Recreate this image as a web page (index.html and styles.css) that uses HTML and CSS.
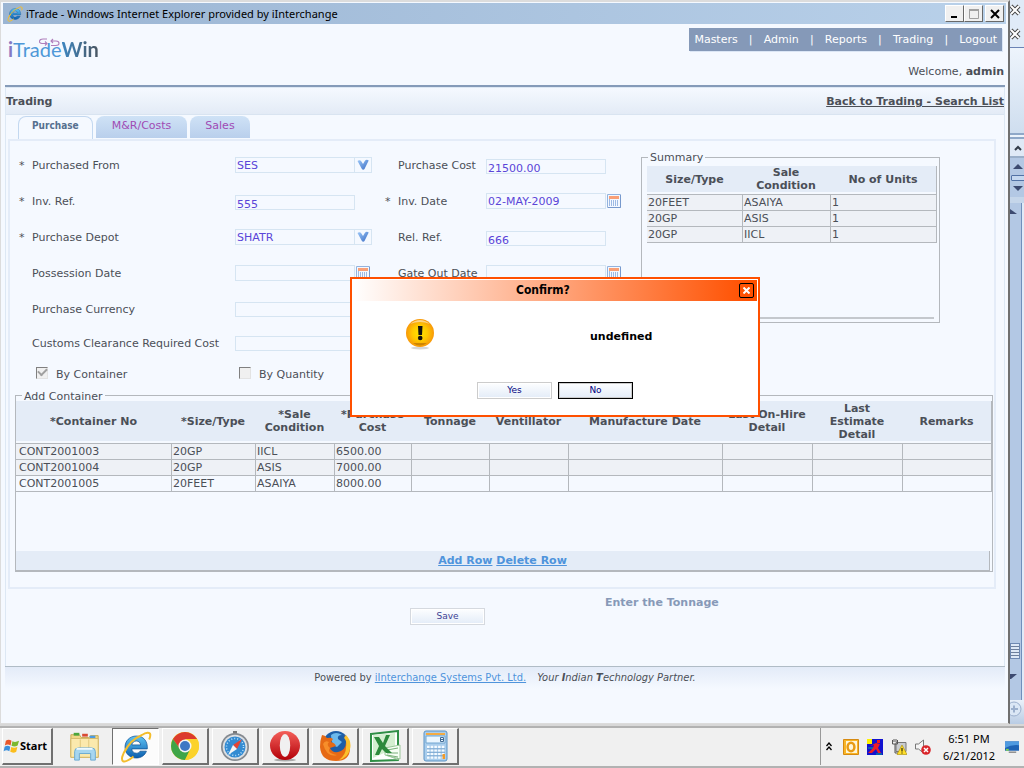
FILE: index.html
```html
<!DOCTYPE html>
<html lang="en">
<head>
<meta charset="utf-8">
<title>iTrade - Trading</title>
<link rel="stylesheet" href="styles.css">
</head>
<body>
<svg class="defs" aria-hidden="true">
  <defs>
    <linearGradient id="blue" x1="0" y1="0" x2="0" y2="1"><stop offset="0" stop-color="#5fc4f5"/><stop offset="1" stop-color="#0c5fae"/></linearGradient>
    <linearGradient id="red" x1="0" y1="0" x2="0" y2="1"><stop offset="0" stop-color="#f4605a"/><stop offset="1" stop-color="#b30008"/></linearGradient>
    <linearGradient id="tick" x1="0" y1="0" x2="1" y2="1"><stop offset="0" stop-color="#9cc8f8"/><stop offset="1" stop-color="#3a6cc4"/></linearGradient>
    <radialGradient id="amber" cx=".5" cy=".5" r=".55"><stop offset="0" stop-color="#ffe600"/><stop offset=".5" stop-color="#ffc800"/><stop offset="1" stop-color="#f68e0c"/></radialGradient>
    <symbol id="i-ie" viewBox="0 0 32 32">
      <path d="M16.500 5C9.600 5 5 10 5 16.200 5 22.600 9.900 27 16.200 27c4.900 0 8.600-2.500 10.200-6.800h-6.300c-.9 1.400-2.100 2-3.700 2-2.500 0-4.500-1.600-4.600-4.300h15.500C27.900 10.300 23.500 5 16.500 5zm-4.600 8.900c.3-2.300 2-3.900 4.400-3.900 2.500 0 4.100 1.600 4.300 3.900z" fill="url(#blue)" stroke="#0b4d90" stroke-width=".7"/>
      <path d="M22 4c4-2.800 8-3 8.300-.3.100 1.700-.4 3.300-1.100 4.800M6.500 17C2 24 .8 29 3.200 30.300c2.200 1 6.200-1.300 10.300-4.700M22 4C14.800 7 8 13.500 4.500 21" fill="none" stroke="#f4bd2c" stroke-width="2"/>
    </symbol>
    <symbol id="i-cal" viewBox="0 0 14 14">
      <path d="M.5.500h13v13H.5z" fill="#f4f8ff" stroke="#93b3de"/><path d="M2 2h10v3H2z" fill="#f9a077"/>
      <path d="M2.500 5v7M4.500 6v6M6.500 6v6M8.500 6v6M10.500 6v6" stroke="#9dbae4"/><path d="M13.500 1v12.500H1" stroke="#7799cd" fill="none"/>
    </symbol>
    <symbol id="i-down" viewBox="0 0 12 12"><path d="M.5 2c1.200-1 3-.8 3.900.4L6 5l1.800-3c.9-1.300 2.500-1.500 3.900-.5L7.500 10c-.6 1.100-2 1.100-2.600 0z" fill="url(#tick)"/></symbol>
  </defs>
</svg>

<div class="desktop">
  <div class="window">
    <header class="titlebar">
      <svg class="i16"><use href="#i-ie"/></svg>
      <span class="caption">iTrade - Windows Internet Explorer provided by iInterchange</span>
      <span class="winbtns">
        <button class="winbtn" aria-label="Minimize"><svg width="10" height="10"><path d="M1 8h6" stroke="#000" stroke-width="2"/></svg></button>
        <button class="winbtn" aria-label="Maximize"><svg width="10" height="10"><path d="M.5 1.500h9v8h-9z" fill="#f0f0f0" stroke="#a0a0a0"/><path d="M0 1h10" stroke="#a0a0a0" stroke-width="2"/></svg></button>
        <button class="winbtn winclose" aria-label="Close"><svg width="10" height="10"><path d="M1 1l8 8M9 1l-8 8" stroke="#000" stroke-width="2"/></svg></button>
      </span>
    </header>

    <div class="page">
      <div class="masthead">
        <div class="logo">
          <svg class="swirl" viewBox="0 0 21 9"><path d="M8 1H4C0 1-1 5 3 5.500h5M6 3.500l2 2-2 2M12 3h5c4 0 4 4.500 0 4.500h-5M14 1l-2 2 2 2" fill="none" stroke="#b07fbc" stroke-width="1.100"/></svg>
          <span class="logo-i">i</span><span class="logo-trade">Trade</span><span class="logo-win">Win</span>
        </div>
        <div class="account">
          <nav class="menu"><a href="#">Masters</a><i>|</i><a href="#">Admin</a><i>|</i><a href="#">Reports</a><i>|</i><a href="#">Trading</a><i>|</i><a href="#">Logout</a></nav>
          <p class="welcome">Welcome, <b>admin</b></p>
        </div>
      </div>

      <main class="content">
        <div class="heading"><h1>Trading</h1><a href="#">Back to Trading - Search List</a></div>
        <div class="tabs"><button class="tab active">Purchase</button><button class="tab">M&amp;R/Costs</button><button class="tab">Sales</button></div>

        <section class="panel">
          <div class="top">
            <form class="form" id="purchase">
              <span>*</span><label for="from">Purchased From</label>
              <div class="field"><select id="from"><option>SES</option></select><span class="arrow"><svg class="i12"><use href="#i-down"/></svg></span></div>
              <span></span><label for="cost">Purchase Cost</label>
              <div class="field plain"><input id="cost" value="21500.00"></div>

              <span>*</span><label for="inv">Inv. Ref.</label>
              <div class="field plain"><input id="inv" value="555"></div>
              <span>*</span><label for="invdate">Inv. Date</label>
              <div class="field"><input id="invdate" value="02-MAY-2009"><button type="button" class="cal" aria-label="Pick invoice date"><svg class="i14"><use href="#i-cal"/></svg></button></div>

              <span>*</span><label for="depot">Purchase Depot</label>
              <div class="field"><select id="depot"><option>SHATR</option></select><span class="arrow"><svg class="i12"><use href="#i-down"/></svg></span></div>
              <span></span><label for="rel">Rel. Ref.</label>
              <div class="field plain"><input id="rel" value="666"></div>

              <span></span><label for="poss">Possession Date</label>
              <div class="field"><input id="poss"><button type="button" class="cal" aria-label="Pick possession date"><svg class="i14"><use href="#i-cal"/></svg></button></div>
              <span></span><label for="gate">Gate Out Date</label>
              <div class="field"><input id="gate"><button type="button" class="cal" aria-label="Pick gate out date"><svg class="i14"><use href="#i-cal"/></svg></button></div>

              <span></span><label for="cur">Purchase Currency</label>
              <div class="field wide"><input id="cur"></div>
              <span></span><label for="customs">Customs Clearance Required Cost</label>
              <div class="field wide"><input id="customs"></div>
              <div class="checks">
                <label><input type="checkbox" checked disabled>By Container</label>
                <label><input type="checkbox" disabled>By Quantity</label>
              </div>
            </form>

            <fieldset class="box summary">
              <legend>Summary</legend>
              <div class="scroller">
                <table class="grid">
                  <colgroup><col class="w95"><col class="w88"><col class="w106"></colgroup>
                  <thead><tr><th>Size/Type</th><th>Sale Condition</th><th>No of Units</th></tr></thead>
                  <tbody>
                    <tr><td>20FEET</td><td>ASAIYA</td><td>1</td></tr>
                    <tr><td>20GP</td><td>ASIS</td><td>1</td></tr>
                    <tr><td>20GP</td><td>IICL</td><td>1</td></tr>
                  </tbody>
                </table>
              </div>
            </fieldset>
          </div>

          <fieldset class="box containers">
            <legend>Add Container</legend>
            <div class="rows">
              <table class="grid tall">
                <colgroup><col class="w155"><col class="w84"><col class="w79"><col class="w77"><col class="w78"><col class="w79"><col class="w154"><col class="w90"><col class="w90"><col class="w89"></colgroup>
                <thead><tr><th>*Container No</th><th>*Size/Type</th><th>*Sale Condition</th><th>*Purchase Cost</th><th>Tonnage</th><th>Ventillator</th><th>Manufacture Date</th><th>Last On-Hire Detail</th><th>Last<br>Estimate<br>Detail</th><th>Remarks</th></tr></thead>
                <tbody>
                  <tr><td>CONT2001003</td><td>20GP</td><td>IICL</td><td>6500.00</td><td></td><td></td><td></td><td></td><td></td><td></td></tr>
                  <tr><td>CONT2001004</td><td>20GP</td><td>ASIS</td><td>7000.00</td><td></td><td></td><td></td><td></td><td></td><td></td></tr>
                  <tr class="light"><td>CONT2001005</td><td>20FEET</td><td>ASAIYA</td><td>8000.00</td><td></td><td></td><td></td><td></td><td></td><td></td></tr>
                </tbody>
              </table>
            </div>
            <div class="rowbar"><a href="#">Add Row</a> <a href="#">Delete Row</a></div>
          </fieldset>
        </section>

        <div class="actions">
          <button class="btn" form="purchase">Save</button>
          <p class="hint">Enter the Tonnage</p>
        </div>
      </main>

      <footer class="footer">Powered by <a href="#">iInterchange Systems Pvt. Ltd.</a> <em>Your <b>I</b>ndian <b>T</b>echnology Partner.</em></footer>
    </div>

    <div class="dialog" role="dialog" aria-label="Confirm?">
      <div class="dialog-head"><span>Confirm?</span>
        <button class="dialog-x" aria-label="Close dialog"><svg width="7" height="7"><path d="M.5.500l6 6M6.500.500l-6 6" stroke="#fff" stroke-width="2"/></svg></button>
      </div>
      <div class="dialog-body">
        <svg class="warn" viewBox="0 0 30 32"><ellipse cx="15" cy="30" rx="9" ry="1.500" fill="#bbb" opacity=".6"/><circle cx="15" cy="15" r="14" fill="url(#amber)"/><path d="M5 6Q15-2 25 6 15 2 5 6z" fill="#fff" opacity=".5"/><path d="M8 25h14q-7 5-14 0z" fill="#b06a00" opacity=".6"/><path d="M13 8h4.500l-.5 9h-3.500z" fill="#111"/><circle cx="15.200" cy="20" r="2.300" fill="#111"/></svg>
        <p>undefined</p>
      </div>
      <div class="dialog-foot"><button class="btn">Yes</button><button class="btn default">No</button></div>
    </div>
  </div>

  <aside class="behind">
    <div class="b-tools">
      <svg width="12" height="12"><path d="M1 2l8 8M9 2l-8 8" stroke="#444" stroke-width="4"/><path d="M1 2l8 8M9 2l-8 8" stroke="#fff" stroke-width="2"/></svg>
      <svg width="12" height="12"><path d="M1 2l8 8M9 2l-8 8" stroke="#444" stroke-width="4"/><path d="M1 2l8 8M9 2l-8 8" stroke="#fff" stroke-width="2"/></svg>
    </div>
    <div class="b-ribbon"></div>
    <div class="b-collapse"><svg width="8" height="6"><path d="M1 5l3-3 3 3" fill="none" stroke="#333c4a" stroke-width="2"/></svg></div>
    <div class="b-scroll">
      <svg width="10" height="6"><path d="M0 5l5-5 5 5z" fill="#3c4a70"/></svg>
      <span class="b-thumb"></span>
      <svg width="10" height="6"><path d="M0 0h10L5 5z" fill="#3c4a70"/></svg>
    </div>
    <div class="b-track">
      <svg width="8" height="6"><path d="M0 0l7 5H0z" fill="#3c4a70"/></svg>
      <span class="b-grip"></span>
      <svg width="8" height="6"><path d="M0 0h7L1 5H0z" fill="#3c4a70"/></svg>
    </div>
    <div class="b-zoom"><svg width="15" height="18"><circle cx="4" cy="9" r="7" fill="#dbe7f5" stroke="#9cb0cd"/><path d="M1 9h7M4 5.500v7" stroke="#9cb0cd" stroke-width="2"/></svg></div>
  </aside>
</div>

<div class="taskbar">
  <button class="start"><svg width="17" height="16" viewBox="0 0 18 16"><path d="M3 2.500q3-2 6 0L8 7.500q-3-2-6 0z" fill="#e8562a"/><path d="M10 3q3 1.500 7-.5L15.500 7.500q-3 2-6.500.300z" fill="#7cb82f"/><path d="M1.700 8.700q3-2 6 0L6.700 13.500q-3-2-6 0z" fill="#3a8fdc"/><path d="M8.700 9q3 1.500 6.500 0L14 14q-3 2-6.300.2z" fill="#fbbd1c"/></svg>Start</button>
  <button class="task flat" aria-label="Windows Explorer"><svg viewBox="0 0 34 34"><path d="M2 5h9l2 3h8l2-2h8v23H2z" fill="#f0d888" stroke="#c9a74e"/><path d="M5 3h6v3H5z" fill="#4aa53c"/><path d="M14 4h6v3h-6z" fill="#d94a33"/><path d="M22 6h6v3h-6z" fill="#4b9be2"/><path d="M2 9h29v20H2z" fill="#fbe9ad" stroke="#d3b869"/><path d="M12 10v14M21 10v14" stroke="#dfc67c"/><path d="M6 32v-9q0-4 4-4h14q4 0 4 4v9h-5v-7H11v7z" fill="#a6d6f0" stroke="#68a9d2"/><path d="M8 20h17" stroke="#effaff" stroke-width="2"/></svg></button>
  <button class="task pressed" aria-label="Internet Explorer"><svg><use href="#i-ie"/></svg></button>
  <button class="task" aria-label="Chrome"><svg viewBox="0 0 32 32"><circle cx="16" cy="16" r="14" fill="#fcd116"/><path d="M3.900 9A14 14 0 0 1 28.100 9L16 10l-5.200 9z" fill="#dc3b2e"/><path d="M3.900 9A14 14 0 0 0 16 30l5.200-11H11z" fill="#3fa548"/><path d="M16 9h12.100A14 14 0 0 1 16 30l6-11z" fill="#fbd22b"/><circle cx="16" cy="16" r="6.500" fill="#f5f5f5"/><circle cx="16" cy="16" r="5" fill="#3f78c4"/></svg></button>
  <button class="task" aria-label="Safari"><svg viewBox="0 0 32 32"><path d="M14 1h4v3h-4z" fill="#777"/><circle cx="16" cy="17" r="14" fill="#858a90"/><circle cx="16" cy="17" r="12.300" fill="#dcdfe2"/><circle cx="16" cy="17" r="10.500" fill="#338bd2"/><circle cx="16" cy="17" r="8.500" fill="none" stroke="#bce1f8" stroke-width="1.500" stroke-dasharray="1 2"/><path d="M23 9l-5 10-4-4z" fill="#e44332"/><path d="M9 25l5-10 4 4z" fill="#f5f5f5"/></svg></button>
  <button class="task" aria-label="Opera"><svg viewBox="0 0 32 32"><ellipse cx="16" cy="30" rx="11" ry="1.500" fill="#aaa"/><ellipse cx="16" cy="15.500" rx="15" ry="14.500" fill="url(#red)"/><ellipse cx="16" cy="15.500" rx="5.200" ry="11.500" fill="#f0f0f0"/></svg></button>
  <button class="task" aria-label="Firefox"><svg viewBox="0 0 32 32"><circle cx="17" cy="14" r="13" fill="#1d5ea8"/><path d="M12 5q5-4 11 0-5 0-4 4l4 3-5 5q-6-2-6-12z" fill="#6cb9ec"/><path d="M3 5q3 0 5 3 4-1 6 1l-2 3q4 1 5 4l-6 2q2 5 8 4 8-2 8-10 0-4-2-7 6 5 6 13 0 13-14 13Q2 31 1 17 1 10 3 5z" fill="#e66a15"/><path d="M27 5q6 6 4 14-2 9-11 11 7-5 7-13 1-7-2-9z" fill="#fbc02c"/><path d="M4 14q2-4 6-2-3 3 1 6-4 5 7 7-10 3-14-11z" fill="#f78e2a"/></svg></button>
  <button class="task" aria-label="Excel"><svg viewBox="0 0 32 32"><path d="M2 4l27-3v29L2 31z" fill="#fff" stroke="#2f8f45" stroke-width="2"/><path d="M4 5l22-2v15L4 28z" fill="#d4efd0"/><path d="M16 18l15-3v14l-15-4zM17 25l13 5" fill="#f7fff5" stroke="#9bc79a"/><path d="M18 20l11-2M18 23l11 0M18 25l11 2" stroke="#79b07a"/><path d="M5 7h5l4 6 3-8h4l-5 11 7 7h-6l-4-4-3 6H6l4-9z" fill="#2c8a3b"/></svg></button>
  <button class="task" aria-label="Calculator"><svg viewBox="0 0 32 32"><rect x="5" y="1" width="23" height="30" rx="2" fill="#a9cdec" stroke="#5b92c4"/><path d="M7 3h19v2H7z" fill="#f4ab42"/><path d="M7 6h19v7H7z" fill="#eaf6ff" stroke="#72a6d0"/><path d="M21.500 7.500h3v4h-3zM21.500 9.500h3" fill="none" stroke="#426a93"/><path d="M8 17h18M8 20.500h18M8 24h18M8 27.500h18" stroke="#f5fbff" stroke-width="2.500" stroke-dasharray="2.500 1.200"/><path d="M8 18.800h18M8 22.300h18M8 25.800h18" stroke="#6b9bc6" stroke-width=".8"/><path d="M23.500 24h2.500v5h-2.500z" fill="#f29a28"/></svg></button>
  <div class="tray">
    <svg width="6" height="9"><path d="M.5 4l2.500-3 2.500 3M.5 8l2.500-3 2.500 3" fill="none" stroke="#000" stroke-width="1.300"/></svg>
    <svg class="i16" viewBox="0 0 16 16"><path d="M.5.500h15v15H.5z" fill="#f9b526" stroke="#d68a11"/><path d="M3 2h11v12H3z" fill="#fff6d8"/><ellipse cx="8" cy="8" rx="3.400" ry="4.200" fill="none" stroke="#e99b14" stroke-width="2.500"/></svg>
    <svg class="i16" viewBox="0 0 16 16"><path d="M0 0h16v16H0z" fill="#1212d0"/><path d="M0 0h5v5H0z" fill="#fff200"/><path d="M10 1h3v3h-3zM9 4l4 1-2 4 3 5h-3l-2-4-4 4H1l5-5 1-3-4 1z" fill="#ee1c24"/><path d="M1 9h5M9 15h6" stroke="#0a8"/></svg>
    <svg class="i16" viewBox="0 0 16 16"><path d="M5 3.500h10v9H5z" fill="#c9ccd0" stroke="#777"/><path d="M1.500 1v4h5V1M3 0v3M5 0v3M4 5v9h3" fill="none" stroke="#555"/><path d="M11 6l5 9.500H6z" fill="#ffde2a" stroke="#a88b00" stroke-width=".6"/><path d="M11 9v3.500M11 13.500v1" stroke="#000"/></svg>
    <svg class="i16" viewBox="0 0 16 16"><path d="M.5 5h3l5-4v13l-5-4h-3z" fill="#f4f4f4" stroke="#777"/><circle cx="11" cy="11" r="4.800" fill="#d9252a"/><path d="M9 9l4 4M13 9l-4 4" stroke="#fff" stroke-width="1.500"/></svg>
    <time class="clock">6:51 PM<br>6/21/2012</time>
    <svg width="14" height="14" viewBox="0 0 15 14"><path d="M0 1h15v10H0z" fill="#1f63b5"/><path d="M0 1h15v4Q7 4 0 8z" fill="#4f9ae0"/><path d="M1 9h3v2H1z" fill="#7bd34b"/><path d="M4 12h8v1H4z" fill="#555"/></svg>
  </div>
</div>
</body>
</html>
```
FILE: styles.css
```css
* { box-sizing: border-box; }
body {
  margin: 0;
  min-height: 100vh;
  display: flex;
  flex-direction: column;
  font: 11px/13px "DejaVu Sans", Verdana, sans-serif;
  color: #4b4f57;
  background: #b2b2b2;
}
button, input, select { font: inherit; color: inherit; margin: 0; padding: 0; border: 0; background: none; border-radius: 0; }
h1, p { margin: 0; font-size: 11px; }
svg { display: block; flex: none; }
.defs { position: absolute; width: 0; height: 0; }
.i16 { width: 16px; height: 16px; }
.i14 { width: 14px; height: 14px; }
.i12 { width: 12px; height: 12px; }

.desktop { flex: 1; display: flex; }
.window {
  position: relative;
  flex: 1;
  display: flex;
  flex-direction: column;
  background: #f5f9ff;
  border: 1px solid #dcdcdc;
  border-top-width: 2px;
  border-right: 2px solid #707070;
  padding: 1px 2px 0;
}

.titlebar {
  display: flex;
  align-items: center;
  gap: 3px;
  height: 21px;
  padding: 0 2px 0 4px;
  background: linear-gradient(90deg, #9bb5d3, #b9d1ea);
  color: #000;
  font: 11px/20px "Noto Sans", sans-serif;
}
.caption { flex: 1; }
.winbtns { display: flex; }
.winbtn {
  width: 19px;
  height: 17px;
  display: grid;
  place-items: center;
  background: #f0f0f0;
  border: 1px solid #fff;
  border-right-color: #696969;
  border-bottom-color: #696969;
}
.winclose { margin-left: 2px; }

.page { flex: 1; display: flex; flex-direction: column; padding: 0 1px 0 2px; }
.masthead { display: flex; justify-content: space-between; height: 63px; padding: 4px 3px 0; border-bottom: 2px solid #859bb9; }
.logo { position: relative; height: 36px; padding-top: 9px; display: flex; font: 20px/24px Lato, sans-serif; }
.logo-i { color: #8679c4; font-weight: 700; }
.logo-trade { color: #4e98d8; }
.logo-win { color: transparent; background: linear-gradient(90deg, #3d86c0, #4a5560); background-clip: text; font-weight: 700; }
.swirl { position: absolute; left: 31px; top: 10px; width: 21px; height: 9px; }
.account { display: flex; flex-direction: column; align-items: flex-end; }
.menu { display: flex; height: 23px; padding: 0 5px; line-height: 24px; background: #8599b8; color: #fff; box-shadow: 1px 1px #dbe6f5; }
.menu a { color: #fff; text-decoration: none; }
.menu i { font-style: normal; width: 26px; text-align: center; }
.welcome { padding: 14px 0 0; margin-right: -2px; }

.content { flex: 1; border: 1px solid #dde8f4; border-width: 1px 1px 0; display: flex; flex-direction: column; }
.heading { display: flex; justify-content: space-between; height: 27px; line-height: 27px; font-weight: 700; background: linear-gradient(#f5f9ff, #e3ebf6); border-bottom: 1px solid #d9e4f1; }
.heading a { color: inherit; }
.tabs { display: flex; gap: 3px; height: 24px; padding: 1px 0 0 12px; }
.tab { height: 22px; padding: 0 15px 3px; color: #a04bb4; background: linear-gradient(#cfe2f6, #b9cfec); border-radius: 8px 8px 0 0; }
.tab:nth-child(2) { padding-inline: 16px; }
.tab.active { height: 23px; color: #56708f; background: #f5f9ff; border: 1px solid #c3d8f0; border-bottom: 0; font: 700 10px/12px "DejaVu Sans Condensed", Tahoma, sans-serif; padding: 0 13px 5px; }

.panel { margin: 0 8px 0 2px; padding: 6px 1px 15px 5px; border: 2px solid #e4ecf8; }
.top { display: flex; align-items: flex-start; }
.form {
  display: grid;
  grid-template-columns: 13px 203px 150px 13px 88px 155px;
  grid-template-rows: repeat(5, 36px) 32px 31px;
  align-items: center;
  padding-left: 4px;
}
.field { display: flex; align-items: center; }
.field input, .field select { width: 120px; height: 16px; padding: 0 1px; border: 1px solid #d6e5f2; color: #5a45d8; appearance: none; }
.field.plain { padding-top: 3px; }
.field.plain input { height: 15px; padding-top: 3px; }
.field.wide { grid-column: 3 / -1; }
.field.wide input { height: 15px; }
.arrow { width: 17px; height: 16px; display: grid; place-items: center; border: 1px solid #d6e5f2; border-left: 0; }
.cal { margin-left: 1px; }
.checks { grid-column: 2 / -1; display: grid; grid-template-columns: 203px 1fr; padding-left: 4px; }
.checks label { display: flex; align-items: center; gap: 8px; }
.checks input { appearance: none; width: 12px; height: 12px; background: #f0f0f0; border: 1px solid #e3e3e3; border-top-color: #808080; border-left-color: #808080; display: grid; place-items: center; margin-bottom: 4px; }
.checks input:checked::after { content: ""; width: 7px; height: 4px; margin-top: -3px; border: solid #a0a0a0; border-width: 0 0 2px 2px; rotate: -45deg; }

.box { min-width: 0; margin: 0; padding: 0; border: 1px solid #b4b8bd; }
.box legend { margin-left: 6px; padding: 0 2px; }
.summary { flex: 0 0 299px; margin-top: 4px; padding: 2px 3px 3px 5px; }
.summary legend { margin-left: 1px; }
.scroller { height: 153px; margin-right: 2px; border-bottom: 2px solid #c4c8cd; }
.grid { width: 100%; table-layout: fixed; border-collapse: separate; border-spacing: 0; border-right: 1px solid #b4b8bd; }
.grid th { height: 28px; padding: 0; background: #e4ecf7; border-bottom: 2px solid #f5f9ff; }
.grid.tall th { height: 42px; }
.grid td { height: 16px; padding: 0 0 0 1px; line-height: 15px; background: #eef1f6; border-bottom: 1px solid #b4b8bd; border-left: 1px solid #b4b8bd; white-space: nowrap; }
.grid td:first-child { border-left: 0; }
.grid.tall td:first-child { padding-left: 3px; }
.grid tbody tr:first-child td { height: 17px; border-top: 1px solid #b4b8bd; }
.grid .light td { background: #f5f9ff; }
.w95 { width: 95px; } .w88 { width: 88px; } .w106 { width: 106px; }
.w155 { width: 155px; } .w84 { width: 84px; } .w79 { width: 79px; } .w77 { width: 77px; } .w78 { width: 78px; }
.w154 { width: 154px; } .w90 { width: 90px; } .w89 { width: 89px; }

.containers legend { height: 11px; line-height: 13px; }
.rows { height: 150px; }
.rowbar { height: 20px; line-height: 20px; margin-right: 2px; text-align: center; font-weight: 700; background: #e4ecf7; border-right: 1px solid #b4b8bd; border-bottom: 1px solid #b4b8bd; }
.rowbar a { color: #4f94dc; }

.actions { display: flex; gap: 120px; padding: 7px 0 0 404px; }
.actions .btn { margin-top: 12px; color: #3d3f94; border-color: #d5d9df; }
.hint { font-weight: 700; color: #8799b8; }
.btn { width: 75px; height: 17px; font-size: 9px; color: #000080; background: linear-gradient(#fdfeff, #e3ecf8); border: 1px solid #ccc; box-shadow: inset 0 0 0 1px #fff; }

.footer { height: 57px; padding-top: 4px; border-top: 1px solid #b0bcc6; background: linear-gradient(#e3ebf8, #f5f9ff 22px); text-align: center; font: 11px/14px "DejaVu Sans Condensed", Tahoma, sans-serif; }
.footer a { color: #4f94dc; }
.footer em { margin-left: 8px; }

.dialog { position: absolute; left: 349px; top: 275px; width: 410px; height: 140px; display: flex; flex-direction: column; color: #000; background: #fff; border: 2px solid #ff5000; }
.dialog-head { display: flex; align-items: center; justify-content: space-between; height: 21px; margin: 1px 1px 0; padding: 0 3px 1px 163px; background: linear-gradient(90deg, #fff, #ff5000 98%); font: 700 12px/20px "DejaVu Sans Condensed", Tahoma, sans-serif; }
.dialog-x { width: 15px; height: 15px; display: grid; place-items: center; border: 1px solid #000; border-radius: 2px; }
.dialog-body { flex: 1; display: flex; align-items: center; padding: 0 0 16px 53px; font-weight: 700; }
.dialog-body p { margin-left: 155px; padding-top: 6px; }
.warn { width: 30px; height: 32px; }
.dialog-foot { display: flex; gap: 6px; padding: 0 0 16px 125px; }
.btn.default { border-color: #000; box-shadow: inset 0 0 0 1px #ccc; }

.behind { width: 15px; display: flex; flex-direction: column; background: #c5d6ea; }
.b-tools { height: 48px; padding-top: 4px; display: flex; flex-direction: column; gap: 12px; background: #e0ebf8; border-bottom: 1px solid #6b83b5; }
.b-ribbon { height: 91px; background: linear-gradient(#edf4fc, #cfdeef); border-bottom: 6px double #8fa8c8; }
.b-collapse { height: 19px; display: grid; place-items: center; background: #dfe9f6; border-bottom: 2px solid #9aafc9; }
.b-scroll { height: 39px; padding: 6px 0 5px; display: flex; flex-direction: column; justify-content: space-between; align-items: center; background: #b3c8e4; }
.b-thumb { width: 14px; height: 6px; border: 1px solid #5272a5; background: #c5d8f0; border-radius: 1px; }
.b-track { flex: 1; display: flex; flex-direction: column; margin-top: 6px; padding-top: 6px; background: #b3c8e4; border-right: 3px solid #e0ebf8; box-shadow: inset -1px 0 #6f8fbc; }
.b-grip { height: 16px; width: 10px; margin-top: auto; margin-bottom: 15px; border: 1px solid #6d88b2; background: repeating-linear-gradient(#dde8f6 0 2px, #6d7f9c 2px 3px); }
.b-track svg:last-child { margin-bottom: 20px; }
.b-zoom { height: 24px; background: linear-gradient(#eaf1fa, #b9cce4); }

.taskbar { display: flex; height: 44px; padding: 4px 5px 3px 2px; gap: 3px; background: linear-gradient(#d8d8d8 0 2px, #b2b2b2 2px 4px, #f0f0f0 4px 42px, #b2b2b2 42px); }
.start, .task { border: 1px solid #fff; border-right: 2px solid #707070; border-bottom: 2px solid #707070; background: #f0f0f0; }
.start { width: 51px; margin-right: 6px; display: flex; align-items: center; color: #000; font: 700 11px/16px "Noto Sans", sans-serif; }
.task { width: 47px; display: grid; place-items: center; }
.task svg { width: 32px; height: 32px; }
.task.flat { border-color: transparent; }
.task.pressed { background: #fcfcfc; border: 1px solid #fff; border-top-color: #707070; border-left-color: #707070; }
.tray { margin-left: auto; padding-left: 5px; display: flex; align-items: center; gap: 8px; border-left: 1px solid #999; }
.tray svg:first-child { margin-right: 3px; }
.clock { width: 56px; margin-left: 2px; text-align: center; color: #000; font: 11px/17px "Noto Sans", sans-serif; }
```
